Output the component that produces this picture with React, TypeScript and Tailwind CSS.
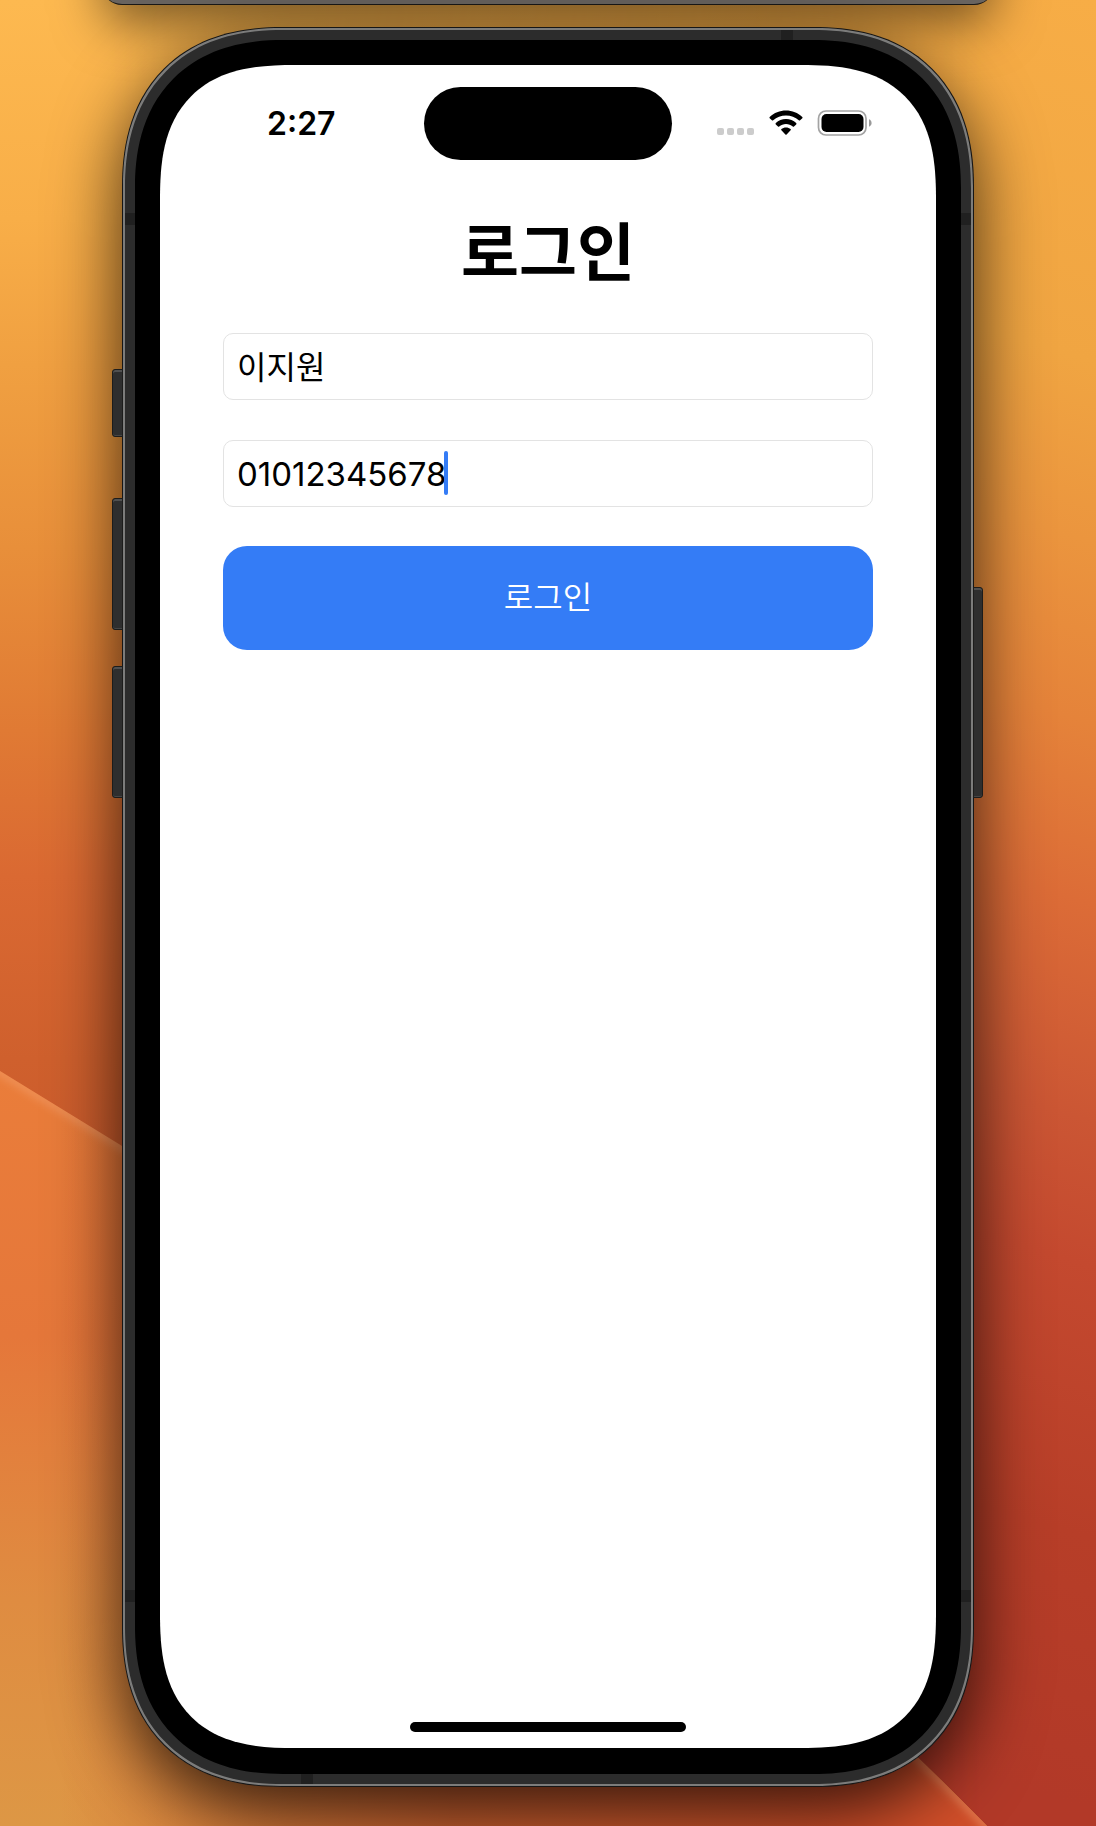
import { useState } from 'react';

function Wallpaper() {
  return (
    <svg
      aria-hidden="true"
      className="absolute inset-0 h-full w-full"
      viewBox="0 0 1096 1826"
      preserveAspectRatio="none"
    >
      <defs>
        <linearGradient id="left" x1="0" y1="0" x2="0" y2="1">
          <stop offset="0" stopColor="#fdb950" />
          <stop offset="0.12" stopColor="#f8ae48" />
          <stop offset="0.2" stopColor="#f0a041" />
          <stop offset="0.3" stopColor="#e88f3a" />
          <stop offset="0.4" stopColor="#e07a34" />
          <stop offset="0.48" stopColor="#da6932" />
          <stop offset="0.58" stopColor="#cf602d" />
          <stop offset="1" stopColor="#b23a28" />
        </linearGradient>
        <linearGradient id="right" gradientUnits="userSpaceOnUse" x1="1096" y1="0" x2="596" y2="1660">
          <stop offset="0" stopColor="#f7ad46" />
          <stop offset="0.2" stopColor="#f0a542" />
          <stop offset="0.3" stopColor="#eb953e" />
          <stop offset="0.4" stopColor="#e5833a" />
          <stop offset="0.5" stopColor="#dc6c37" />
          <stop offset="0.62" stopColor="#cb5634" />
          <stop offset="0.7" stopColor="#c4492f" />
          <stop offset="0.85" stopColor="#b73e28" />
          <stop offset="1" stopColor="#b23928" />
        </linearGradient>
        <linearGradient id="blend">
          <stop offset="0.1" stopColor="#000" />
          <stop offset="0.9" stopColor="#fff" />
        </linearGradient>
        <mask id="fade">
          <rect width="1096" height="1826" fill="url(#blend)" />
        </mask>
        <linearGradient id="fold" gradientUnits="userSpaceOnUse" x1="0" y1="1072" x2="0" y2="1826">
          <stop offset="0" stopColor="#ea7d3a" />
          <stop offset="0.35" stopColor="#e5773a" />
          <stop offset="0.7" stopColor="#df8c41" />
          <stop offset="1" stopColor="#dd9745" />
        </linearGradient>
        <linearGradient id="foldRed" gradientUnits="userSpaceOnUse" x1="60" y1="0" x2="1040" y2="0">
          <stop offset="0" stopColor="#d25028" stopOpacity="0" />
          <stop offset="0.4" stopColor="#c8542a" stopOpacity="0.8" />
          <stop offset="0.8" stopColor="#d24f2a" />
        </linearGradient>
        <filter id="soft">
          <feGaussianBlur stdDeviation="4" />
        </filter>
        <clipPath id="foldShape">
          <path d="M0 1071 L122 1146 Q607 1440 987 1826 L0 1826 Z" />
        </clipPath>
      </defs>
      <rect width="1096" height="1826" fill="url(#left)" />
      <rect width="1096" height="1826" fill="url(#right)" mask="url(#fade)" />
      <g clipPath="url(#foldShape)">
        <rect y="1060" width="1096" height="766" fill="url(#fold)" />
        <rect y="1060" width="1096" height="766" fill="url(#foldRed)" />
        <path
          d="M-20 1059 L122 1146 Q607 1440 997 1836"
          fill="none"
          stroke="#f5a878"
          strokeOpacity="0.5"
          strokeWidth="8"
          filter="url(#soft)"
        />
      </g>
    </svg>
  );
}

function SideKey({ className }: { className: string }) {
  return (
    <span
      aria-hidden="true"
      className={`absolute border border-[#1c1c1b] bg-[#2e2e2e] shadow-[inset_0_2px_0_#505050,inset_0_-1px_0_#454545] ${className}`}
    />
  );
}

function Seam({ className }: { className: string }) {
  return <span aria-hidden="true" className={`absolute bg-[#202020] ${className}`} />;
}

function StatusBar() {
  return (
    <header className="grid grid-cols-[1fr_auto_1fr] items-center pt-[22px]">
      <time className="pl-[107px] text-[32px] leading-[40px] font-semibold">2:27</time>
      <div className="h-[73px] w-[248px] rounded-full bg-black" />
      <div className="flex items-center pb-[2px] pl-[45px]">
        <div className="mt-[18px] flex gap-[3px]">
          {[0, 1, 2, 3].map((dot) => (
            <span key={dot} className="h-[7px] w-[7px] rounded-[2px] bg-[#cccccc]" />
          ))}
        </div>
        <svg aria-label="Wi-Fi" className="ml-[15px] h-[26px] w-[34px]" viewBox="0 0 34 26">
          <path d="M17 .6C10.800 .6 5.100 3 .7 6.900c-.4.400-.4.900 0 1.300l2.200 2.100c.4.400.9.400 1.300 0C7.600 7.200 12.100 5.400 17 5.400s9.400 1.800 12.800 4.900c.4.400.9.400 1.300 0l2.200-2.100c.4-.4.4-.9 0-1.300C28.900 3 23.200 .6 17 .6Z" />
          <path d="M17 9.100c-3.900 0-7.500 1.500-10.200 4-.4.400-.4.900 0 1.300l2.200 2.100c.3.400.9.400 1.200.1 1.900-1.600 4.200-2.600 6.800-2.600s4.900 1 6.800 2.600c.3.300.9.300 1.200-.1l2.200-2.100c.4-.4.4-.9 0-1.300-2.700-2.500-6.300-4-10.200-4Z" />
          <path d="M17 17.500c-1.800 0-3.400.6-4.600 1.600-.4.400-.4.900 0 1.200l4 4.100c.4.400.8.400 1.200 0l4-4.100c.4-.3.400-.8 0-1.200-1.200-1-2.800-1.600-4.600-1.600Z" />
        </svg>
        <svg aria-label="배터리" className="ml-[14px] h-[26px] w-[56px]" viewBox="0 0 56 26">
          <rect x="1.500" y="1" width="47.500" height="24" rx="7.500" fill="none" stroke="#a3a3a3" strokeWidth="1.700" />
          <rect x="4.500" y="4" width="42" height="18" rx="5" />
          <path d="M52 9.300c1.600.6 2.600 2 2.600 3.700s-1 3.100-2.600 3.700Z" fill="#999" />
        </svg>
      </div>
    </header>
  );
}

export default function App() {
  const [name, setName] = useState('이지원');
  const [phone, setPhone] = useState('01012345678');
  const field =
    'h-[67px] w-full rounded-[10px] border border-[#e3e3e3] bg-white pr-4 pl-[13px] text-black outline-none';

  return (
    <div className="relative isolate flex min-h-screen flex-col items-center overflow-hidden font-[Inter,'Noto_Sans_CJK_KR',sans-serif] text-black">
      <Wallpaper />

      <div className="relative -mt-[95px] h-[100px] w-full max-w-[892px] rounded-b-[20px] border-b border-[#191817] bg-[#68635f] shadow-[0_20px_50px_-2px_rgba(0,0,0,0.5)]" />

      <div className="relative mt-[22px] mb-[39px] flex w-full max-w-[852px] flex-1 flex-col rounded-[160px] border border-[#161616] bg-[#7c7c7b] p-[2px] shadow-[0_24px_70px_rgba(0,0,0,0.75)] [corner-shape:superellipse(1.2)]">
        <SideKey className="top-[341px] -left-[11px] h-[68px] w-[11px] rounded-l-[3px]" />
        <SideKey className="top-[470px] -left-[11px] h-[132px] w-[11px] rounded-l-[3px]" />
        <SideKey className="top-[638px] -left-[11px] h-[132px] w-[11px] rounded-l-[3px]" />
        <SideKey className="top-[559px] -right-[10px] h-[211px] w-[10px] rounded-r-[3px]" />

        <div className="relative flex flex-1 flex-col rounded-[158px] bg-[#2c2c2c] p-[10px] [corner-shape:superellipse(1.2)]">
          <Seam className="top-0 right-[178px] h-[10px] w-[12px]" />
          <Seam className="bottom-0 left-[176px] h-[10px] w-[12px]" />
          <Seam className="top-[183px] left-0 h-[12px] w-[10px]" />
          <Seam className="top-[183px] right-0 h-[12px] w-[10px]" />
          <Seam className="bottom-[182px] left-0 h-[12px] w-[10px]" />
          <Seam className="right-0 bottom-[182px] h-[12px] w-[10px]" />

          <div className="flex flex-1 flex-col rounded-[148px] bg-black p-[25px] pb-[26px] [corner-shape:superellipse(1.2)]">
            <div className="flex flex-1 flex-col rounded-[135px] bg-white [corner-shape:superellipse(1.4)]">
              <StatusBar />

              <main className="flex-1 px-[63px] pt-[52px]">
                <h1 className="text-center text-[63px] leading-[80px] font-bold">로그인</h1>
                <form className="mt-[41px] flex flex-col" onSubmit={(event) => event.preventDefault()}>
                  <input
                    aria-label="이름"
                    className={`${field} pb-1 text-[32px]`}
                    value={name}
                    onChange={(event) => setName(event.target.value)}
                  />
                  <div className="relative mt-[40px]">
                    <input
                      aria-label="전화번호"
                      inputMode="tel"
                      className={`${field} text-[33px]`}
                      value={phone}
                      onChange={(event) => setPhone(event.target.value)}
                    />
                    <span
                      aria-hidden="true"
                      className="absolute top-[11px] left-[221px] h-[44px] w-[4px] rounded-full bg-[#347cf6]"
                    />
                  </div>
                  <button
                    type="submit"
                    className="mt-[39px] h-[104px] rounded-[24px] bg-[#347cf6] text-[32px] font-[350] text-white"
                  >
                    로그인
                  </button>
                </form>
              </main>

              <div className="mb-[16px] h-[10px] w-[276px] self-center rounded-full bg-black" />
            </div>
          </div>
        </div>
      </div>
    </div>
  );
}
